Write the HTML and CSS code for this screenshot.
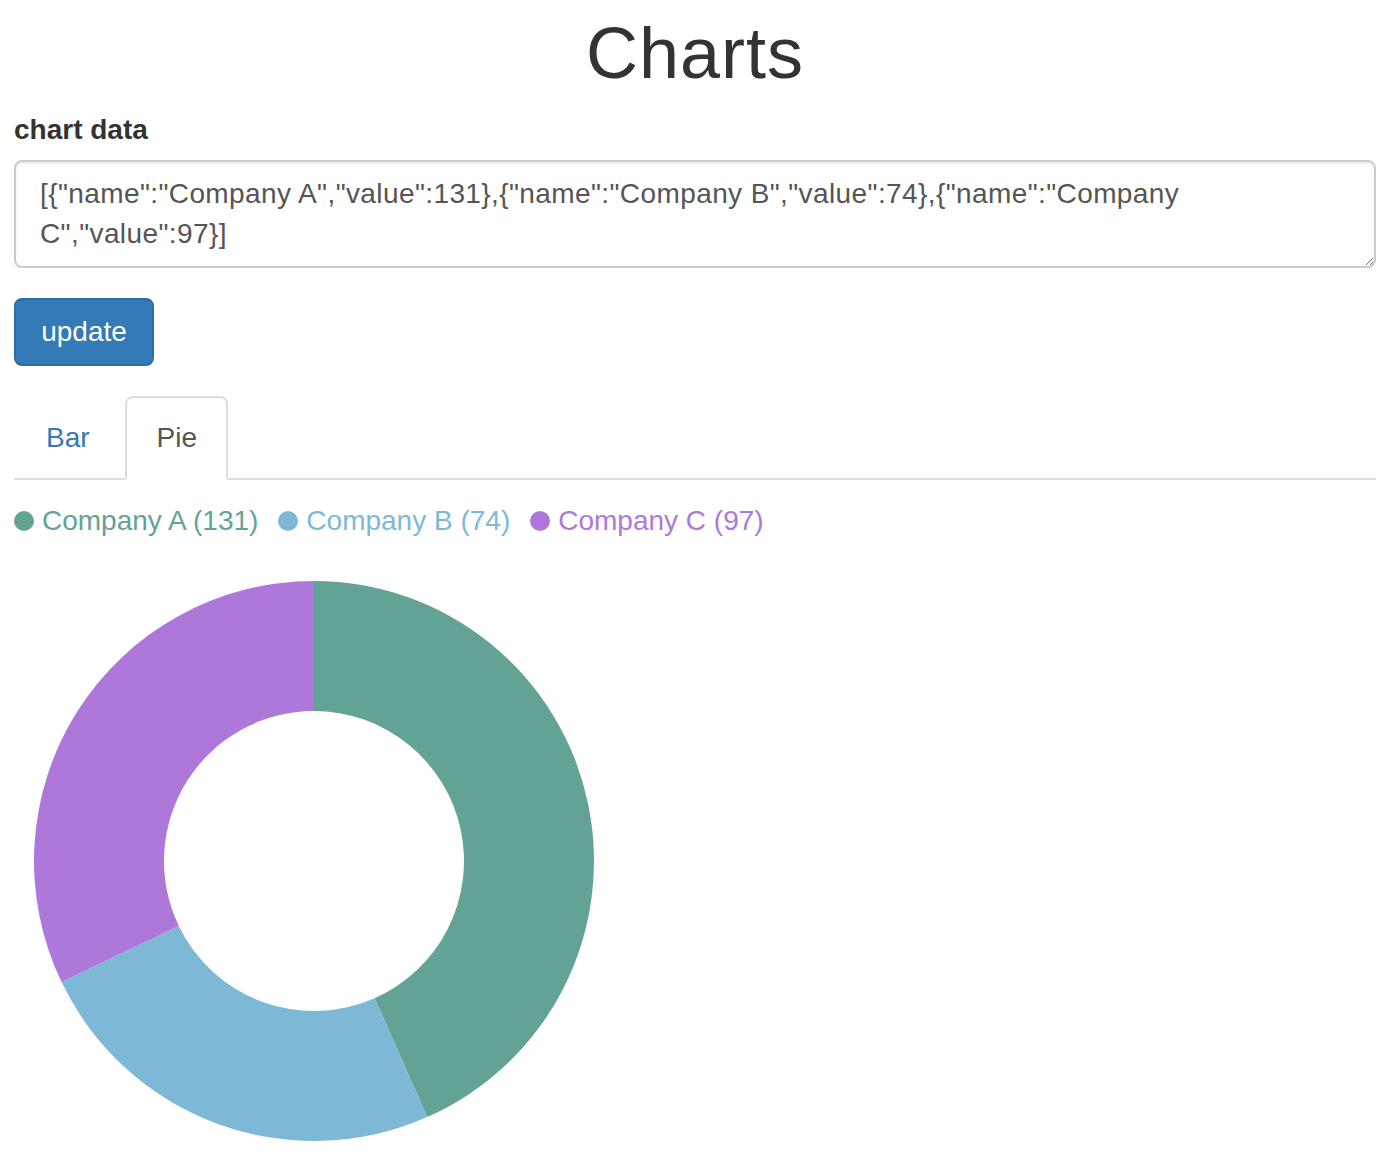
FILE: index.html
```html
<!DOCTYPE html>
<html lang="en">
<head>
<meta charset="utf-8">
<title>Charts</title>
<link rel="stylesheet" href="styles.css">
</head>
<body>
<div class="container">
  <h1 class="title">Charts</h1>
  <div class="form-group">
    <label class="label" for="data">chart data</label>
    <textarea id="data" class="data" rows="2">[{"name":"Company A","value":131},{"name":"Company B","value":74},{"name":"Company C","value":97}]</textarea>
  </div>
  <button class="btn" type="button">update</button>
  <ul class="tabs">
    <li class="tab"><a href="#">Bar</a></li>
    <li class="tab active"><a href="#">Pie</a></li>
  </ul>
  <div class="legend">
    <span class="item a"><span class="dot"></span>Company A (131)</span>
    <span class="item b"><span class="dot"></span>Company B (74)</span>
    <span class="item c"><span class="dot"></span>Company C (97)</span>
  </div>
  <svg class="donut" width="600" height="600" viewBox="0 0 600 600">
    <path fill="#63a395" d="M300 20 A280 280 0 0 1 413.18 556.11 L360.63 437.20 A150 150 0 0 0 300 150 Z"/>
    <path fill="#7db9d6" d="M413.18 556.11 A280 280 0 0 1 47.55 421.11 L164.76 364.88 A150 150 0 0 0 360.63 437.20 Z"/>
    <path fill="#ae78db" d="M47.55 421.11 A280 280 0 0 1 300 20 L300 150 A150 150 0 0 0 164.76 364.88 Z"/>
  </svg>
</div>
</body>
</html>
```
FILE: styles.css
```css
html, body {
  margin: 0;
  padding: 0;
  background: #fff;
}
body {
  font-family: "Liberation Sans", Arial, Helvetica, sans-serif;
  font-size: 28px;
  line-height: 40px;
  color: #333;
}
.container {
  width: 1362px;
  padding-left: 14px;
}
.title {
  margin: 14px 0 17px;
  font-size: 72px;
  line-height: 79px;
  font-weight: 500;
  text-align: center;
  letter-spacing: 1px;
}
.form-group {
  margin-bottom: 30px;
}
.label {
  display: block;
  font-weight: bold;
  margin-bottom: 10px;
}
.data {
  display: block;
  box-sizing: border-box;
  width: 100%;
  height: 108px;
  margin: 0;
  padding: 12px 24px;
  font-family: "Liberation Sans", Arial, Helvetica, sans-serif;
  font-size: 28px;
  line-height: 40px;
  color: #555;
  background: #fff;
  border: 2px solid #ccc;
  border-radius: 8px;
  box-shadow: inset 0 2px 2px rgba(0,0,0,.075);
  resize: vertical;
  letter-spacing: 0.4px;
}
.btn {
  display: block;
  box-sizing: border-box;
  height: 68px;
  width: 140px;
  margin: 0 0 30px;
  padding: 12px 24px;
  font-family: "Liberation Sans", Arial, Helvetica, sans-serif;
  font-size: 28px;
  line-height: 40px;
  color: #fff;
  background: #337ab7;
  border: 2px solid #2e6da4;
  border-radius: 8px;
}
.tabs {
  display: flex;
  margin: 0;
  padding: 0;
  list-style: none;
  border-bottom: 2px solid #ddd;
}
.tab {
  margin-bottom: -2px;
  margin-right: 4px;
}
.tab a {
  display: block;
  padding: 20px 29px 20px 30px;
  line-height: 40px;
  color: #337ab7;
  text-decoration: none;
  border: 2px solid transparent;
  border-radius: 8px 8px 0 0;
}
.tab.active a {
  color: #555;
  background: #fff;
  border-color: #ddd #ddd transparent;
}
.legend {
  display: flex;
  gap: 20px;
  margin-top: 21px;
  height: 40px;
  align-items: center;
}
.item {
  display: flex;
  align-items: center;
  gap: 8px;
}
.dot {
  width: 20px;
  height: 20px;
  border-radius: 50%;
}
.a { color: #63a395; }
.a .dot { background: #63a395; }
.b { color: #7db9d6; }
.b .dot { background: #7db9d6; }
.c { color: #ae78db; }
.c .dot { background: #ae78db; }
.donut {
  display: block;
  margin-top: 20px;
}
```
